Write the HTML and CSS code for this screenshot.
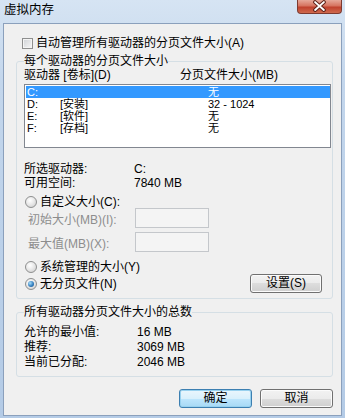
FILE: index.html
```html
<!DOCTYPE html>
<html lang="zh-CN">
<head>
    <meta charset="UTF-8">
    <meta name="viewport" content="width=device-width, initial-scale=1.0">
    <title>虚拟内存</title>
    <link rel="stylesheet" href="styles.css">
</head>
<body>
    <div class="window">
        <div class="titlebar">
            <span class="title">虚拟内存</span>
            <div class="close">
                <svg width="45" height="14" viewBox="0 0 45 14">
                    <path d="M18.5 2 L27.5 10 M27.5 2 L18.5 10" stroke="#5e2219" stroke-width="4" stroke-linecap="round"/>
                    <path d="M18.5 2 L27.5 10 M27.5 2 L18.5 10" stroke="#fff" stroke-width="2" stroke-linecap="round"/>
                </svg>
            </div>
        </div>
        <div class="client">
            <div class="check-row"><span class="checkbox"></span>自动管理所有驱动器的分页文件大小(A)</div>

            <fieldset class="group drives">
                <legend>每个驱动器的分页文件大小</legend>
                <div class="cols">
                    <span class="col-drive">驱动器 [卷标](D)</span>
                    <span>分页文件大小(MB)</span>
                </div>
                <div class="listbox">
                    <div class="row selected"><span class="c1">C:</span><span class="c2"></span><span>无</span></div>
                    <div class="row"><span class="c1">D:</span><span class="c2">[安装]</span><span>32 - 1024</span></div>
                    <div class="row"><span class="c1">E:</span><span class="c2">[软件]</span><span>无</span></div>
                    <div class="row"><span class="c1">F:</span><span class="c2">[存档]</span><span>无</span></div>
                </div>
                <div class="info">
                    <div class="info-row"><span class="info-label">所选驱动器:</span><span>C:</span></div>
                    <div class="info-row"><span class="info-label">可用空间:</span><span>7840 MB</span></div>
                </div>
                <div class="radio-row custom"><span class="radio"></span>自定义大小(C):</div>
                <div class="field-row"><span class="field-label">初始大小(MB)(I):</span><span class="textbox"></span></div>
                <div class="field-row second"><span class="field-label">最大值(MB)(X):</span><span class="textbox"></span></div>
                <div class="radio-row system"><span class="radio"></span>系统管理的大小(Y)</div>
                <div class="radio-row none"><span class="radio on"></span>无分页文件(N)<button class="btn setup">设置(S)</button></div>
            </fieldset>

            <fieldset class="group totals">
                <legend>所有驱动器分页文件大小的总数</legend>
                <div class="total-row first"><span class="total-label">允许的最小值:</span><span>16 MB</span></div>
                <div class="total-row"><span class="total-label">推荐:</span><span>3069 MB</span></div>
                <div class="total-row"><span class="total-label">当前已分配:</span><span>2046 MB</span></div>
            </fieldset>

            <div class="actions">
                <button class="btn default">确定</button>
                <button class="btn">取消</button>
            </div>
        </div>
    </div>
</body>
</html>
```

FILE: styles.css
```css
body{
    margin: 0;
    font-family: "Liberation Sans", "Noto Sans CJK SC", sans-serif;
    font-size: 12px;
    color: #000;
}
.window{
    width: 345px;
    height: 418px;
    display: flex;
    flex-direction: column;
    background: linear-gradient(180deg, #d6e4f3 0%, #c3d6ec 20%, #b4cbe6 100%);
    overflow: hidden;
}
.titlebar{
    height: 23px;
    display: flex;
    justify-content: space-between;
    align-items: flex-start;
    padding: 0 3px 0 4px;
    flex-shrink: 0;
}
.title{
    margin-top: 2px;
    font-size: 12.5px;
    line-height: 16px;
}
.close{
    width: 45px;
    height: 14px;
    box-sizing: border-box;
    border: 1px solid #7d3a30;
    border-top: none;
    border-radius: 0 0 4px 4px;
    background: linear-gradient(180deg, #e6a899 0%, #d6735f 45%, #c0412d 55%, #cf6a4e 100%);
    display: flex;
}
.close svg{
    margin-left: -1px;
}
.client{
    flex: 1;
    margin: 0 3px 2px;
    background: #f0f0f0;
    border: 1px solid #8ba0bc;
    padding: 13px 8px 0 12px;
    display: flex;
    flex-direction: column;
}
.check-row{
    display: flex;
    align-items: center;
    gap: 3px;
    height: 12px;
    line-height: 12px;
    margin-left: 6px;
}
.checkbox{
    width: 11px;
    height: 11px;
    box-sizing: border-box;
    border: 1px solid #8e8f8f;
    background: linear-gradient(135deg, #cfd2d6, #f7f7f7);
    box-shadow: inset 0 0 0 1px #f4f4f4;
}
.group{
    margin: 5px 0 0;
    padding: 0 1px 5px 7px;
    border: 1px solid #d5dfe5;
    border-radius: 3px;
    min-width: 0;
}
.group legend{
    padding: 0;
    height: 14px;
    line-height: 14px;
}
.cols{
    display: flex;
    height: 14px;
    line-height: 14px;
}
.col-drive{
    width: 156px;
}
.listbox{
    margin-top: 2px;
    height: 64px;
    box-sizing: border-box;
    border: 1px solid #828790;
    background: #fff;
    padding: 1px 0 1px 1px;
    font-size: 11px;
}
.row{
    display: flex;
    height: 12px;
    line-height: 12px;
    padding-left: 1px;
}
.row.selected{
    background: #3399ff;
    color: #fff;
}
.c1{
    width: 33px;
}
.c2{
    width: 148px;
}
.info{
    margin-top: 14px;
}
.info-row{
    display: flex;
    height: 14px;
    line-height: 14px;
}
.info-label{
    width: 110px;
}
.radio-row{
    display: flex;
    align-items: center;
    gap: 3px;
    height: 12px;
    line-height: 12px;
    margin-left: 1px;
}
.radio-row.custom{
    margin-top: 6px;
}
.radio-row.system{
    margin-top: 9px;
}
.radio-row.none{
    height: 19px;
    margin-top: 1px;
}
.radio{
    width: 12px;
    height: 12px;
    box-sizing: border-box;
    border-radius: 50%;
    border: 1px solid #8e8f8f;
    background: radial-gradient(circle at 40% 35%, #ffffff 0%, #e9e9e9 45%, #c9c9c9 100%);
    display: flex;
    align-items: center;
    justify-content: center;
}
.radio.on::after{
    content: "";
    width: 6px;
    height: 6px;
    border-radius: 50%;
    background: radial-gradient(circle at 35% 35%, #a8defa 0%, #3580c0 55%, #1b4f80 100%);
}
.field-row{
    display: flex;
    align-items: center;
    height: 20px;
    margin-left: 4px;
    color: #8d8d8d;
}
.field-row.second{
    margin-top: 4px;
}
.field-label{
    width: 107px;
}
.textbox{
    width: 74px;
    height: 20px;
    box-sizing: border-box;
    border: 1px solid #c4c7cb;
    background: #f4f4f4;
}
.btn{
    width: 73px;
    height: 19px;
    padding: 0;
    font: inherit;
    line-height: 17px;
    color: #000;
    border: 1px solid #707070;
    border-radius: 3px;
    background: linear-gradient(180deg, #f2f2f2 0%, #ebebeb 50%, #dddddd 50%, #cfcfcf 100%);
    box-shadow: inset 0 0 0 1px #fbfbfb;
}
.btn.setup{
    width: 72px;
    margin-left: auto;
    margin-right: 9px;
}
.btn.default{
    border-color: #3c7fb1;
    background: linear-gradient(180deg, #eaf6fd 0%, #d9f0fc 50%, #bee6fd 50%, #a7d9f5 100%);
    box-shadow: inset 0 0 0 1px #98d1ef;
}
.group.totals{
    margin-top: 6px;
    padding-bottom: 6px;
}
.total-row{
    display: flex;
    height: 15px;
    line-height: 15px;
}
.total-row.first{
    margin-top: 6px;
}
.total-label{
    width: 113px;
}
.actions{
    display: flex;
    justify-content: flex-end;
    gap: 8px;
    margin-top: 12px;
}
```
